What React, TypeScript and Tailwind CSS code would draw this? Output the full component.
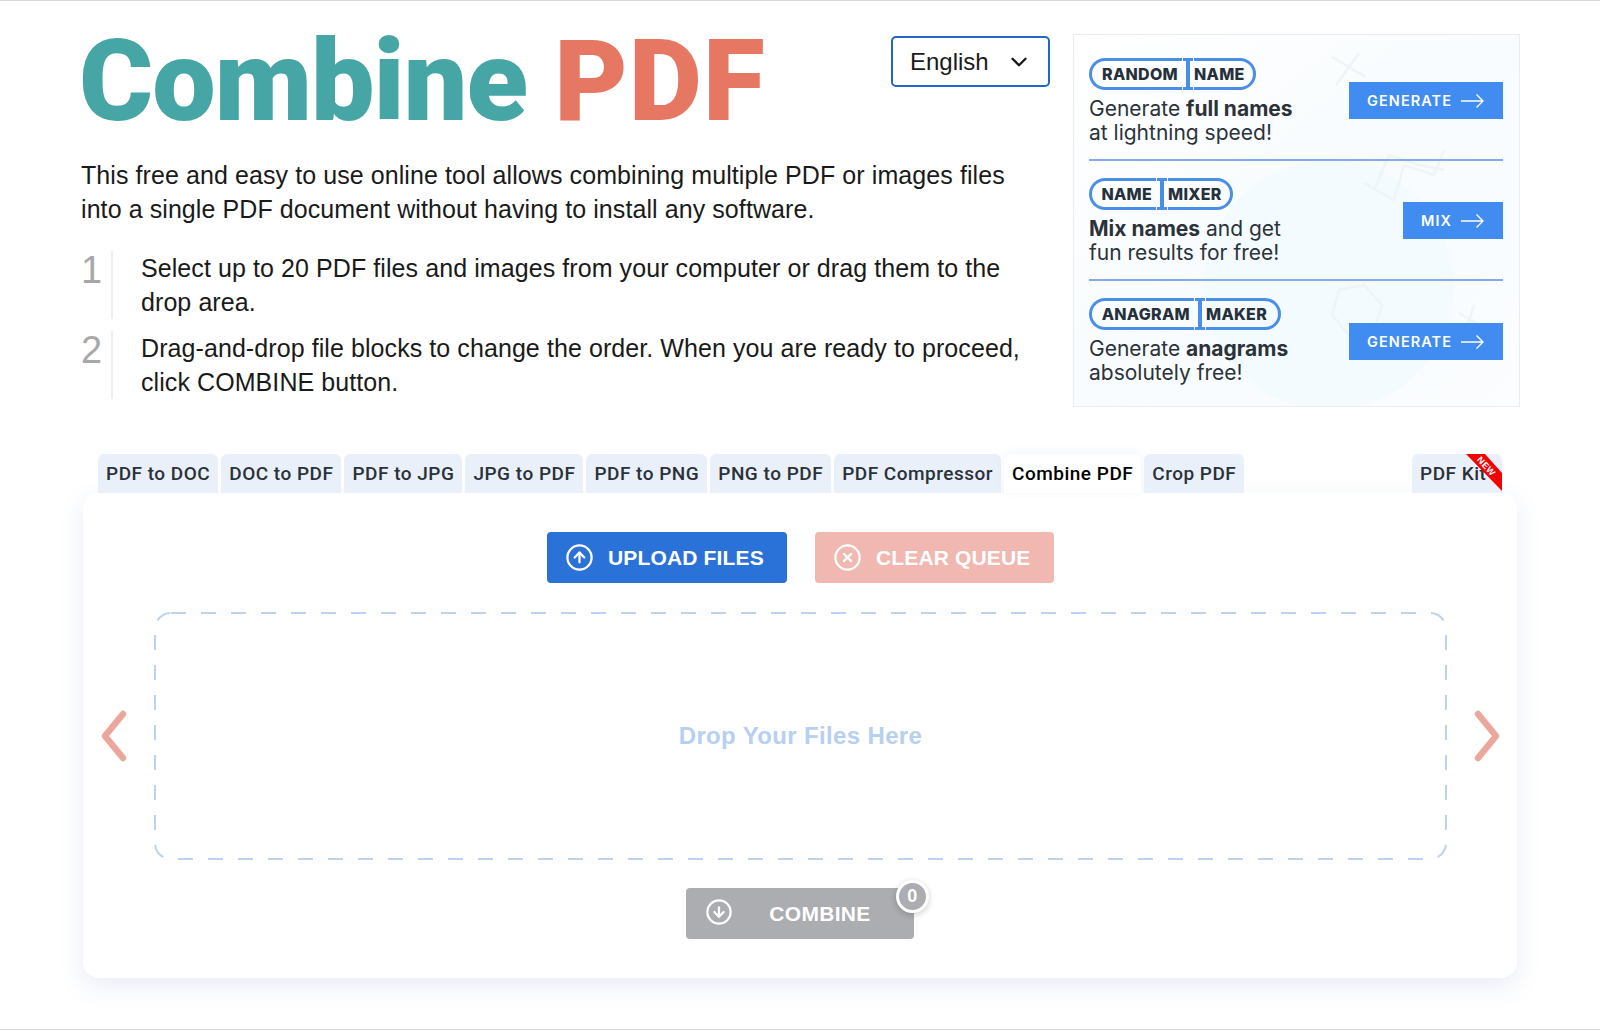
import React from "react";
import { CircleArrowUp, CircleX, CircleArrowDown, ChevronDown } from "lucide-react";

const tabs = ["PDF to DOC", "DOC to PDF", "PDF to JPG", "JPG to PDF", "PDF to PNG", "PNG to PDF", "PDF Compressor"];

function Arrow() {
  return (
    <svg width="23" height="14" viewBox="0 0 23 14" fill="none" stroke="white" strokeWidth="1.4">
      <path d="M0 7H22M15.5 0.5L22 7L15.5 13.5" />
    </svg>
  );
}

function Logo({ a, b, aw, bw }: { a: string; b: string; aw: string; bw: string }) {
  return (
    <div className="flex h-[32px] items-stretch font-['Inter'] text-[16px] font-extrabold tracking-[0.3px] text-[#26303c]">
      <span className={`flex items-center justify-end rounded-l-full border-y-[3px] border-l-[3px] border-[#4a8fe7] pr-[4px] ${aw}`}>{a}</span>
      <svg width="10" height="32" viewBox="0 0 10 32" className="mx-[1px] shrink-0" fill="#4a8fe7">
        <path d="M0 0H10V3H7V29H10V32H0V29H3V3H0Z" />
      </svg>
      <span className={`flex items-center rounded-r-full border-y-[3px] border-r-[3px] border-[#4a8fe7] ${bw}`}>{b}</span>
    </div>
  );
}

function AdRow({ logo, text, btn, rowClass, btnClass }: { logo: React.ReactNode; text: React.ReactNode; btn: string; rowClass: string; btnClass: string }) {
  return (
    <div className={`flex items-start justify-between ${rowClass}`}>
      <div>
        {logo}
        <p className="mt-[7px] font-['Inter'] text-[21px] leading-[24px] text-[#2b323a]">{text}</p>
      </div>
      <div className={`flex h-[37px] items-center gap-[9px] bg-[#408cf0] pl-[18px] pr-[19px] font-['Inter'] text-[14.5px] font-semibold tracking-[1.05px] text-white ${btnClass}`}>
        {btn}
        <Arrow />
      </div>
    </div>
  );
}

export default function App() {
  return (
    <div className="h-[1030px] w-[1600px] overflow-hidden border-y border-[#d8d8d8] bg-white font-['Liberation_Sans',sans-serif] text-[#1a1a1a]">
      <div className="flex justify-between pl-[81px] pr-[80px] pt-[33px]">
        <div className="w-[969px]">
          <div className="flex items-start justify-between">
            <h1 className="-ml-[2px] h-[100px] font-['Roboto'] text-[113px] font-black leading-[96px] tracking-[-1px] text-[#46a6a5]">
              Combine <span className="tracking-[1px] text-[#e67863]">PDF</span>
            </h1>
            <div className="mt-[2px] flex h-[51px] w-[159px] items-center justify-between rounded-[5px] border-2 border-[#1f66c9] pl-[17px] pr-[16px] text-[24px]">
              English
              <ChevronDown size={26} strokeWidth={2.2} />
            </div>
          </div>
          <p className="mt-[24px] whitespace-nowrap text-[25px] leading-[34px] tracking-[0.08px]">
            This free and easy to use online tool allows combining multiple PDF or images files
            <br />
            into a single PDF document without having to install any software.
          </p>
          <div className="mt-[25px] flex min-h-[68px] items-stretch">
            <span className="w-[30px] shrink-0 text-[38px] leading-[38px] text-[#a8a8a8]">1</span>
            <p className="whitespace-nowrap border-l-2 border-[#efefef] pl-[28px] text-[25px] leading-[34px] tracking-[0.08px]">
              Select up to 20 PDF files and images from your computer or drag them to the
              <br />
              drop area.
            </p>
          </div>
          <div className="mt-[12px] flex min-h-[68px] items-stretch">
            <span className="w-[30px] shrink-0 text-[38px] leading-[38px] text-[#a8a8a8]">2</span>
            <p className="whitespace-nowrap border-l-2 border-[#efefef] pl-[28px] text-[25px] leading-[34px] tracking-[0.08px]">
              Drag-and-drop file blocks to change the order. When you are ready to proceed,
              <br />
              click COMBINE button.
            </p>
          </div>
        </div>

        <aside className="relative h-[373px] w-[447px] overflow-hidden border border-[#ececec] bg-gradient-to-br from-white via-[#f8fcfe] to-[#fbfdff] pl-[15px] pr-[16px]">
          <svg className="absolute inset-0" width="447" height="373" fill="none" stroke="#eef4f7" strokeWidth="2.5">
            <circle cx="255" cy="250" r="125" fill="#f4fbfe" stroke="none" />
            <path d="M262 50L285 18M258 22L292 42" />
            <path d="M290 148L320 165L330 130L360 140L370 115M300 155L315 120L345 130L370 135" />
            <path d="M265 255L290 250L308 270L300 295L275 300L258 280Z" />
            <path d="M385 278L405 290M400 270L392 295" />
          </svg>
          <div className="relative">
            <AdRow
              logo={<Logo a="RANDOM" b="NAME" aw="w-[93px]" bw="w-[62px]" />}
              text={<>Generate <b className="font-bold">full names</b><br />at lightning speed!</>}
              btn="GENERATE"
              rowClass="h-[126px] pt-[23px] border-b-2 border-[#85ace4]"
              btnClass="mt-[24px]"
            />
            <AdRow
              logo={<Logo a="NAME" b="MIXER" aw="w-[67px]" bw="w-[65px]" />}
              text={<><b className="font-bold">Mix names</b> and get<br />fun results for free!</>}
              btn="MIX"
              rowClass="h-[120px] pt-[17px] border-b-2 border-[#85ace4]"
              btnClass="mt-[24px]"
            />
            <AdRow
              logo={<Logo a="ANAGRAM" b="MAKER" aw="w-[105px]" bw="w-[75px]" />}
              text={<>Generate <b className="font-bold">anagrams</b><br />absolutely free!</>}
              btn="GENERATE"
              rowClass="h-[120px] pt-[17px]"
              btnClass="mt-[25px]"
            />
          </div>
        </aside>
      </div>

      <div className="ml-[83px] mt-[47px] w-[1434px]">
        <div className="flex justify-between px-[15px]">
          <div className="flex gap-[3px] font-['Roboto'] text-[19px] font-medium tracking-[0.5px]">
            {tabs.map((t) => (
              <div key={t} className="flex h-[39px] items-center rounded-t-[6px] bg-[#e9f0f9] px-[8px] pt-[1px] text-[#2b3138]">
                {t}
              </div>
            ))}
            <div className="flex h-[39px] items-center rounded-t-[6px] bg-white px-[8px] pt-[1px] text-black shadow-[0_-2px_8px_rgba(70,110,190,0.08)]">
              Combine PDF
            </div>
            <div className="flex h-[39px] items-center rounded-t-[6px] bg-[#e9f0f9] px-[8px] pt-[1px] text-[#2b3138]">Crop PDF</div>
          </div>
          <div className="relative flex h-[39px] w-[90px] items-center overflow-hidden rounded-t-[6px] bg-[#e9f0f9] pl-[8px] pt-[1px] font-['Roboto'] text-[19px] font-medium tracking-[0.5px] text-[#2b3138]">
            PDF Kit
            <svg className="absolute right-0 top-0" width="36" height="37" viewBox="0 0 36 37">
              <path d="M0 0H19L36 19V37Z" fill="#f50000" />
              <text x="20" y="18" fontSize="9" fontWeight="700" fill="white" fontFamily="Liberation Sans" textAnchor="middle" transform="rotate(48 23 14)">NEW</text>
            </svg>
          </div>
        </div>

        <section className="h-[485px] rounded-[16px] bg-white pt-[39px] shadow-[0_8px_24px_rgba(70,110,190,0.13)]">
          <div className="flex justify-center gap-[28px] pl-[1px] text-[21px] font-bold tracking-[0.15px] text-white">
            <div className="flex h-[51px] w-[240px] items-center gap-[14px] rounded-[4px] bg-[#2b72d8] pl-[18px]">
              <CircleArrowUp size={29} strokeWidth={1.9} />
              UPLOAD FILES
            </div>
            <div className="flex h-[51px] w-[239px] items-center gap-[14px] rounded-[4px] bg-[#f0b8b1] pl-[18px]">
              <CircleX size={29} strokeWidth={1.9} />
              CLEAR QUEUE
            </div>
          </div>

          <div className="mt-[29px] flex items-center justify-between pl-[18px] pr-[17px]">
            <svg width="26" height="52" viewBox="0 0 26 52" fill="none" stroke="#eba79d" strokeWidth="6.5" strokeLinecap="round" strokeLinejoin="round">
              <path d="M22 4L4 26L22 48" />
            </svg>
            <div className="relative flex h-[248px] w-[1293px] items-center justify-center text-[24px] font-bold tracking-[0.35px] text-[#b7cff0]">
              <svg className="absolute inset-0" width="1293" height="248" fill="none" stroke="#bdd2f0" strokeWidth="2" strokeDasharray="15 15">
                <rect x="1" y="1" width="1291" height="246" rx="16" />
              </svg>
              Drop Your Files Here
            </div>
            <svg width="26" height="52" viewBox="0 0 26 52" fill="none" stroke="#eba79d" strokeWidth="6.5" strokeLinecap="round" strokeLinejoin="round">
              <path d="M4 4L22 26L4 48" />
            </svg>
          </div>

          <div className="mt-[28px] flex justify-center">
            <div className="relative flex h-[51px] w-[228px] items-center justify-center rounded-[4px] bg-[#abadb1] text-[21px] font-bold tracking-[0.3px] text-white">
              <CircleArrowDown size={28} strokeWidth={1.9} className="absolute left-[19px] top-[10px]" />
              <span className="pl-[40px]">COMBINE</span>
              <span className="absolute -right-[15px] -top-[8px] flex h-[33px] w-[33px] items-center justify-center rounded-full border-[3px] border-white bg-[#abadb1] text-[18px] shadow-[0_2px_6px_rgba(0,0,0,0.2)]">
                0
              </span>
            </div>
          </div>
        </section>
      </div>
    </div>
  );
}
